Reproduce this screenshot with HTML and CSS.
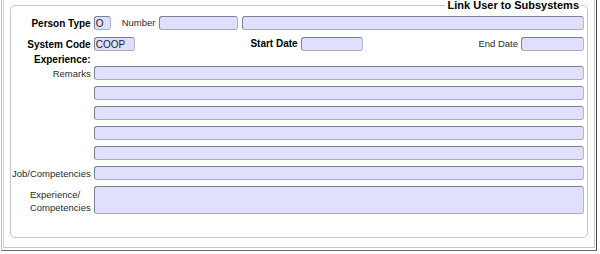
FILE: index.html
```html
<!DOCTYPE html>
<html lang="en">
<head>
    <meta charset="UTF-8">
    <title>Link User to Subsystems</title>
    <link rel="stylesheet" href="styles.css">
</head>
<body>
    <div class="frame">
        <div class="panel">
            <fieldset class="subsys">
                <legend>Link User to Subsystems</legend>
                <div class="form">
                    <label class="lbl bold">Person Type</label>
                    <div class="line">
                        <input class="fld w-type" value="O">
                        <span class="lbl num-lbl">Number</span>
                        <input class="fld w-num">
                        <input class="fld grow">
                    </div>

                    <label class="lbl bold">System Code</label>
                    <div class="line spread">
                        <input class="fld w-code" value="COOP">
                        <div class="group">
                            <span class="lbl bold">Start Date</span>
                            <input class="fld w-date">
                        </div>
                        <div class="group">
                            <span class="lbl">End Date</span>
                            <input class="fld w-date2">
                        </div>
                    </div>

                    <label class="lbl bold exp">Experience:</label>
                    <div></div>

                    <label class="lbl">Remarks</label>
                    <input class="fld">
                    <div></div>
                    <input class="fld">
                    <div></div>
                    <input class="fld">
                    <div></div>
                    <input class="fld">
                    <div></div>
                    <input class="fld">

                    <label class="lbl">Job/Competencies</label>
                    <input class="fld">

                    <label class="lbl two-line">Experience/<br>Competencies</label>
                    <textarea class="fld area"></textarea>
                </div>
            </fieldset>
        </div>
    </div>
</body>
</html>
```

FILE: styles.css
```css
body {
    margin: 0;
    font-family: "Liberation Sans", Arial, sans-serif;
    background-color: #fff;
}
.frame {
    width: 592px;
    margin-left: 1px;
    padding: 0 1px 2px 1px;
    border-left: 1px solid #c4c4c4;
    border-right: 1px solid #4a4a4a;
    border-bottom: 1px solid #6a6a6a;
}
.panel {
    border-left: 1px solid #d4d4d4;
    border-right: 1px solid #c8c8c8;
    border-bottom: 1px solid #c8c8c8;
    padding: 0 6px 9px 6px;
}
.subsys {
    margin: 0;
    padding: 5px 3px 23px 1px;
    border: 1px solid #c6c6c6;
    border-radius: 5px;
}
.subsys legend {
    margin-left: auto;
    margin-right: 3px;
    padding: 0 2px 0 3px;
    font-size: 11px;
    line-height: 11px;
    font-weight: bold;
    color: #000;
}
.form {
    display: grid;
    grid-template-columns: max-content 1fr;
    grid-template-rows: 21px 17px 12px repeat(6, 20px) 28px;
    column-gap: 3px;
    align-items: start;
}
.lbl {
    font-size: 9.5px;
    line-height: 14px;
    padding-top: 1px;
    color: #2a2a2a;
    text-align: right;
    white-space: nowrap;
}
.bold {
    font-size: 10px;
    font-weight: bold;
    color: #000;
}
.lbl.exp {
    line-height: 12px;
    padding-top: 0;
}
.two-line {
    justify-self: end;
    text-align: left;
    line-height: 13px;
    padding-top: 2px;
}
.line {
    display: flex;
    align-items: center;
}
.line .lbl {
    padding-top: 0;
}
.line.spread {
    justify-content: space-between;
}
.group {
    display: flex;
    align-items: center;
    gap: 3px;
}
.num-lbl {
    margin: 0 4px 0 11px;
}
.fld {
    box-sizing: border-box;
    height: 14px;
    margin: 0;
    padding: 0 1px;
    border: 1px solid;
    border-color: #7b8198 #b4b8c6 #a8acba #7b8198;
    border-radius: 3px;
    background-color: #e0e0fc;
    font-family: "Liberation Sans", Arial, sans-serif;
    font-size: 10px;
    color: #222;
    outline: none;
}
.w-type { width: 17px; }
.w-num { width: 79px; margin-right: 4px; }
.w-code { width: 41px; }
.w-date { width: 62px; }
.w-date2 { width: 63px; }
.grow { flex: 1; min-width: 0; }
.area {
    height: 28px;
    resize: none;
    display: block;
}
```
